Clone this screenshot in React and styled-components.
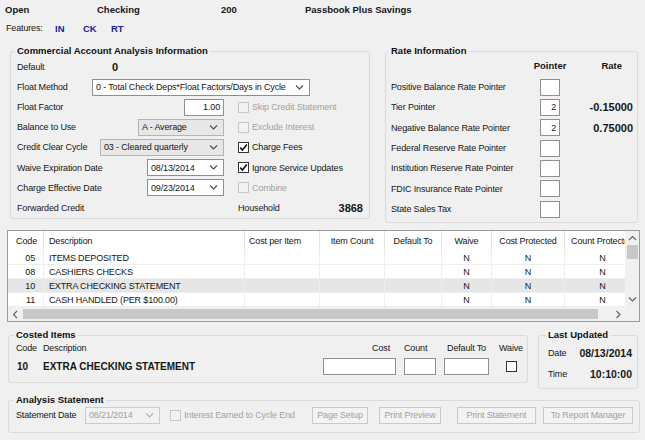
import React from "react";
import styled, { createGlobalStyle } from "styled-components";

const GlobalStyle = createGlobalStyle`
  html, body { margin: 0; padding: 0; background: #f0f0f0; }
  body {
    font-family: "Liberation Sans", Arial, sans-serif;
    font-size: 9px;
    letter-spacing: -0.15px;
    color: #161616;
  }
  * { box-sizing: border-box; }
`;

const Page = styled.div`
  width: 645px;
  height: 440px;
  overflow: hidden;
  padding-top: 2px;
  display: flex;
  flex-direction: column;
`;

const TopBar = styled.div`
  display: grid;
  grid-template-columns: 92px 124px 84px auto;
  padding-left: 5px;
  height: 14px;
  align-items: center;
`;

const Strong = styled.span`
  font-weight: bold;
  font-size: ${(p) => p.$size || 9.5}px;
  letter-spacing: 0;
  white-space: nowrap;
`;

const Features = styled.div`
  display: grid;
  grid-template-columns: 49px 28px 28px auto;
  padding-left: 6px;
  margin-top: 5px;
  height: 14px;
  align-items: center;
`;

const Feature = styled.span`
  font-weight: bold;
  font-size: 9.5px;
  letter-spacing: 0;
  color: #1b1ba8;
`;

const TopSection = styled.div`
  display: flex;
  align-items: flex-start;
  gap: 15px;
  padding-left: 10px;
  margin-top: 10px;
`;

const Group = styled.fieldset`
  margin: 0;
  min-width: 0;
  width: ${(p) => p.$w}px;
  height: ${(p) => p.$h}px;
  padding: 0 ${(p) => p.$pr ?? 4}px 0 ${(p) => p.$pl ?? 6}px;
  border: 1px solid #dadada;
  border-radius: 3px;
`;

const Legend = styled.legend`
  padding: 0 2px;
  margin-left: -2px;
  font-weight: bold;
  font-size: 9.5px;
  letter-spacing: 0;
  line-height: 12px;
  color: #111;
`;

/* ---------- commercial ---------- */

const Row = styled.div`
  display: grid;
  grid-template-columns: 209px 1fr;
  column-gap: 12px;
  height: 20.1px;
  align-items: center;
`;

const LeftCell = styled.div`
  display: flex;
  align-items: center;
  justify-content: ${(p) => (p.$start ? "flex-start" : "space-between")};
  padding-right: 2px;
  grid-column: ${(p) => (p.$span ? "1 / -1" : "auto")};
`;

const RightCell = styled.div`
  display: flex;
  align-items: center;
  justify-content: ${(p) => p.$justify || "flex-start"};
  gap: 3px;
`;

const Label = styled.span`
  display: inline-block;
  width: ${(p) => (p.$w ? `${p.$w}px` : "auto")};
  flex: none;
  white-space: nowrap;
  color: ${(p) => (p.$disabled ? "#a2a2a2" : "#161616")};
`;

const Box = styled.div`
  flex: none;
  width: ${(p) => p.$w}px;
  height: ${(p) => p.$h || 17}px;
  display: flex;
  align-items: center;
  justify-content: ${(p) => (p.$right ? "flex-end" : "space-between")};
  padding: 0 ${(p) => (p.$right ? 3 : 5)}px 0 3px;
  background: ${(p) => (p.$flat ? "#e7e7e7" : p.$disabled ? "#f2f2f2" : "#ffffff")};
  border: 1px solid ${(p) => (p.$flat ? "#b4b4b4" : p.$disabled ? "#cccccc" : "#8f8f8f")};
  color: ${(p) => (p.$disabled ? "#a0a0a0" : "#161616")};
  white-space: nowrap;
  overflow: hidden;
`;

const CheckBox = styled.span`
  flex: none;
  width: 11px;
  height: 11px;
  display: inline-flex;
  align-items: center;
  justify-content: center;
  background: ${(p) => (p.$disabled ? "#f2f2f2" : "#ffffff")};
  border: 1px solid ${(p) => (p.$disabled ? "#c6c6c6" : "#333333")};
`;

const Chevron = ({ dir = "down", color = "#4a4a4a" }) => {
  const vertical = dir === "down" || dir === "up";
  const pts = {
    down: "1,1.5 4.5,5 8,1.5",
    up: "1,5 4.5,1.5 8,5",
    left: "5,1 1.5,4.5 5,8",
    right: "1.5,1 5,4.5 1.5,8",
  }[dir];
  return (
    <svg
      width={vertical ? 9 : 7}
      height={vertical ? 7 : 9}
      viewBox={vertical ? "0 0 9 7" : "0 0 7 9"}
    >
      <polyline points={pts} fill="none" stroke={color} strokeWidth="1.1" />
    </svg>
  );
};

const Select = ({ w, value, flat, disabled }) => (
  <Box $w={w} $flat={flat} $disabled={disabled}>
    <span>{value}</span>
    <Chevron color={disabled ? "#b0b0b0" : "#4a4a4a"} />
  </Box>
);

const Check = ({ checked, disabled, children }) => (
  <RightCell>
    <CheckBox $disabled={disabled}>
      {checked && (
        <svg width="9" height="9" viewBox="0 0 9 9">
          <path d="M1.2 4.6 L3.5 7 L7.8 1.6" fill="none" stroke="#111" strokeWidth="1.6" />
        </svg>
      )}
    </CheckBox>
    {children && <Label $disabled={disabled}>{children}</Label>}
  </RightCell>
);

/* ---------- rate ---------- */

const RateGrid = styled.div`
  display: grid;
  grid-template-columns: 149px 20px 1fr;
  grid-auto-rows: ${(p) => p.$row}px;
  align-items: center;
  margin-bottom: ${(p) => p.$mb || 0}px;
`;

const HeadCell = styled.span`
  font-weight: bold;
  font-size: 9.5px;
  letter-spacing: 0;
  white-space: nowrap;
  justify-self: ${(p) => p.$justify || "start"};
  padding-right: ${(p) => p.$pr || 0}px;
`;

const Num = styled.span`
  font-weight: bold;
  font-size: ${(p) => p.$size || 11}px;
  letter-spacing: 0;
  justify-self: end;
  white-space: nowrap;
`;

/* ---------- table ---------- */

const COLS = "36px 201px 75px 65px 57px 50px 73px 76px";

const Table = styled.div`
  margin: 7px 0 0 7px;
  width: 633px;
  height: 92px;
  border: 1px solid #9c9c9c;
  display: grid;
  grid-template-columns: 617px 14px;
  grid-template-rows: 76px 14px;
  grid-template-areas:
    "view vbar"
    "hbar corner";
  background: #f0f0f0;
`;

const Viewport = styled.div`
  grid-area: view;
  overflow: hidden;
  background: #ffffff;
`;

const GridRow = styled.div`
  display: grid;
  grid-template-columns: ${COLS};
  height: ${(p) => p.$h}px;
  background: ${(p) => (p.$selected ? "#e6e6e6" : "#ffffff")};
`;

const Cell = styled.div`
  display: flex;
  align-items: center;
  justify-content: ${(p) => p.$align || "flex-start"};
  padding: 0 ${(p) => p.$pr ?? 4}px 0 ${(p) => p.$pl ?? 4}px;
  white-space: nowrap;
  overflow: hidden;
  border-right: 1px solid ${(p) => (p.$head ? "#e2e2e2" : "#eeeeee")};
  border-bottom: 1px solid ${(p) => (p.$head ? "#ffffff" : "#efefef")};
`;

const VScroll = styled.div`
  grid-area: vbar;
  display: flex;
  flex-direction: column;
  align-items: center;
  padding: 4px 0 4px;
  background: #f0f0f0;
`;

const VThumb = styled.div`
  width: 11px;
  height: 14px;
  background: #c8c8c8;
  margin-top: 3px;
  margin-bottom: auto;
`;

const HScroll = styled.div`
  grid-area: hbar;
  display: flex;
  align-items: center;
  padding: 0 3px 0 4px;
  gap: 4px;
  background: #f0f0f0;
`;

const HThumb = styled.div`
  flex: none;
  width: 575px;
  height: 10px;
  background: #c8c8c8;
  margin-right: auto;
`;

const Corner = styled.div`
  grid-area: corner;
  background: #f0f0f0;
`;

/* ---------- bottom ---------- */

const BottomSection = styled.div`
  display: flex;
  align-items: flex-start;
  gap: 10px;
  padding-left: 8px;
  margin-top: ${(p) => p.$mt}px;
`;

const CostGrid = styled.div`
  display: grid;
  grid-template-columns: 1fr 73px 32px 45px 28px;
  grid-template-rows: 14px 22px;
  column-gap: 8px;
  align-items: center;
`;

const ColLabel = styled.span`
  justify-self: ${(p) => p.$justify || "start"};
  padding-right: ${(p) => p.$pr || 0}px;
  white-space: nowrap;
`;

const CodeDesc = styled.div`
  display: flex;
  align-items: center;
`;

const CostedText = styled.span`
  font-weight: bold;
  font-size: 10px;
  letter-spacing: 0;
  white-space: nowrap;
  display: inline-block;
  width: ${(p) => (p.$w ? `${p.$w}px` : "auto")};
  padding-left: ${(p) => p.$pl || 0}px;
`;

const UpdatedGrid = styled.div`
  display: grid;
  grid-template-columns: auto 1fr;
  grid-auto-rows: 20.5px;
  align-items: center;
  margin-top: 2px;
`;

const ActionRow = styled.div`
  display: flex;
  align-items: center;
  height: 18px;
`;

const DisabledCheck = styled.div`
  display: flex;
  align-items: center;
  gap: 3px;
  width: 143px;
  margin-left: 10px;
`;

const Button = styled.div`
  flex: none;
  width: ${(p) => p.$w}px;
  height: 17px;
  margin-left: ${(p) => p.$ml || 0}px;
  display: flex;
  align-items: center;
  justify-content: center;
  border: 1px solid #c9c9c9;
  background: #f3f3f3;
  color: #a0a0a0;
  white-space: nowrap;
`;

const rows = [
  ["05", "ITEMS DEPOSITED"],
  ["08", "CASHIERS CHECKS"],
  ["10", "EXTRA CHECKING STATEMENT"],
  ["11", "CASH HANDLED (PER $100.00)"],
];

const rateRows = [
  ["Positive Balance Rate Pointer", "", ""],
  ["Tier Pointer", "2", "-0.15000"],
  ["Negative Balance Rate Pointer", "2", "0.75000"],
  ["Federal Reserve Rate Pointer", "", ""],
  ["Institution Reserve Rate Pointer", "", ""],
  ["FDIC Insurance Rate Pointer", "", ""],
  ["State Sales Tax", "", ""],
];

export default function App() {
  return (
    <>
      <GlobalStyle />
      <Page>
        <TopBar>
          <Strong>Open</Strong>
          <Strong>Checking</Strong>
          <Strong>200</Strong>
          <Strong>Passbook Plus Savings</Strong>
        </TopBar>
        <Features>
          <Label>Features:</Label>
          <Feature>IN</Feature>
          <Feature>CK</Feature>
          <Feature>RT</Feature>
        </Features>

        <TopSection>
          <Group $w={360} $h={174} $pl={6} $pr={6}>
            <Legend>Commercial Account Analysis Information</Legend>
            <Row>
              <LeftCell $start>
                <Label $w={95}>Default</Label>
                <Num>0</Num>
              </LeftCell>
            </Row>
            <Row>
              <LeftCell $start $span>
                <Label $w={75}>Float Method</Label>
                <Select w={218} value="0 - Total Check Deps*Float Factors/Days in Cycle" />
              </LeftCell>
            </Row>
            <Row>
              <LeftCell>
                <Label>Float Factor</Label>
                <Box $w={40} $right>1.00</Box>
              </LeftCell>
              <Check disabled>Skip Credit Statement</Check>
            </Row>
            <Row>
              <LeftCell>
                <Label>Balance to Use</Label>
                <Select w={86} flat value="A - Average" />
              </LeftCell>
              <Check disabled>Exclude Interest</Check>
            </Row>
            <Row>
              <LeftCell>
                <Label>Credit Clear Cycle</Label>
                <Select w={124} flat value="03 - Cleared quarterly" />
              </LeftCell>
              <Check checked>Charge Fees</Check>
            </Row>
            <Row>
              <LeftCell>
                <Label>Waive Expiration Date</Label>
                <Select w={77} value="08/13/2014" />
              </LeftCell>
              <Check checked>Ignore Service Updates</Check>
            </Row>
            <Row>
              <LeftCell>
                <Label>Charge Effective Date</Label>
                <Select w={77} value="09/23/2014" />
              </LeftCell>
              <Check disabled>Combine</Check>
            </Row>
            <Row>
              <LeftCell>
                <Label>Forwarded Credit</Label>
              </LeftCell>
              <RightCell $justify="space-between">
                <Label>Household</Label>
                <Num>3868</Num>
              </RightCell>
            </Row>
          </Group>

          <Group $w={253} $h={178} $pl={5} $pr={4}>
            <Legend>Rate Information</Legend>
            <RateGrid $row={16} $mb={4}>
              <span />
              <HeadCell $justify="center">Pointer</HeadCell>
              <HeadCell $justify="end" $pr={11}>Rate</HeadCell>
            </RateGrid>
            <RateGrid $row={20.33}>
              {rateRows.map(([label, ptr, rate]) => (
                <React.Fragment key={label}>
                  <Label>{label}</Label>
                  <Box $w={20} $right>{ptr}</Box>
                  <Num>{rate}</Num>
                </React.Fragment>
              ))}
            </RateGrid>
          </Group>
        </TopSection>

        <Table>
          <Viewport>
            <GridRow $h={20}>
              <Cell $head $align="flex-end" $pr={6}>Code</Cell>
              <Cell $head $pl={5}>Description</Cell>
              <Cell $head>Cost per Item</Cell>
              <Cell $head $align="center">Item Count</Cell>
              <Cell $head $align="center">Default To</Cell>
              <Cell $head $align="center">Waive</Cell>
              <Cell $head $align="center">Cost Protected</Cell>
              <Cell $head $align="center">Count Protected</Cell>
            </GridRow>
            {rows.map(([code, desc]) => (
              <GridRow $h={14} key={code} $selected={code === "10"}>
                <Cell $align="flex-end" $pr={8}>{code}</Cell>
                <Cell $pl={5}>{desc}</Cell>
                <Cell />
                <Cell />
                <Cell />
                <Cell $align="center">N</Cell>
                <Cell $align="center">N</Cell>
                <Cell $align="center">N</Cell>
              </GridRow>
            ))}
          </Viewport>
          <VScroll>
            <Chevron dir="up" color="#606060" />
            <VThumb />
            <Chevron dir="down" color="#606060" />
          </VScroll>
          <HScroll>
            <Chevron dir="left" color="#606060" />
            <HThumb />
            <Chevron dir="right" color="#606060" />
          </HScroll>
          <Corner />
        </Table>

        <BottomSection $mt={7}>
          <Group $w={520} $h={54} $pl={7} $pr={2}>
            <Legend>Costed Items</Legend>
            <CostGrid>
              <CodeDesc>
                <Label $w={27}>Code</Label>
                <Label>Description</Label>
              </CodeDesc>
              <ColLabel $justify="end" $pr={6}>Cost</ColLabel>
              <ColLabel>Count</ColLabel>
              <ColLabel $justify="center">Default To</ColLabel>
              <ColLabel $justify="center">Waive</ColLabel>

              <CodeDesc>
                <CostedText $w={27} $pl={1}>10</CostedText>
                <CostedText>EXTRA CHECKING STATEMENT</CostedText>
              </CodeDesc>
              <Box $w={73} />
              <Box $w={32} />
              <Box $w={45} />
              <RightCell $justify="center">
                <CheckBox />
              </RightCell>
            </CostGrid>
          </Group>

          <Group $w={100} $h={60} $pl={9} $pr={5}>
            <Legend>Last Updated</Legend>
            <UpdatedGrid>
              <Label>Date</Label>
              <Num $size={10.5}>08/13/2014</Num>
              <Label>Time</Label>
              <Num $size={10.5}>10:10:00</Num>
            </UpdatedGrid>
          </Group>
        </BottomSection>

        <BottomSection $mt={5}>
          <Group $w={632} $h={39} $pl={7} $pr={6}>
            <Legend>Analysis Statement</Legend>
            <ActionRow>
              <Label $w={69}>Statement Date</Label>
              <Select w={75} disabled value="08/21/2014" />
              <DisabledCheck>
                <CheckBox $disabled />
                <Label $disabled>Interest Earned to Cycle End</Label>
              </DisabledCheck>
              <Button $w={56}>Page Setup</Button>
              <Button $w={62} $ml={11}>Print Preview</Button>
              <Button $w={79} $ml={16}>Print Statement</Button>
              <Button $w={90} $ml={7}>To Report Manager</Button>
            </ActionRow>
          </Group>
        </BottomSection>
      </Page>
    </>
  );
}
